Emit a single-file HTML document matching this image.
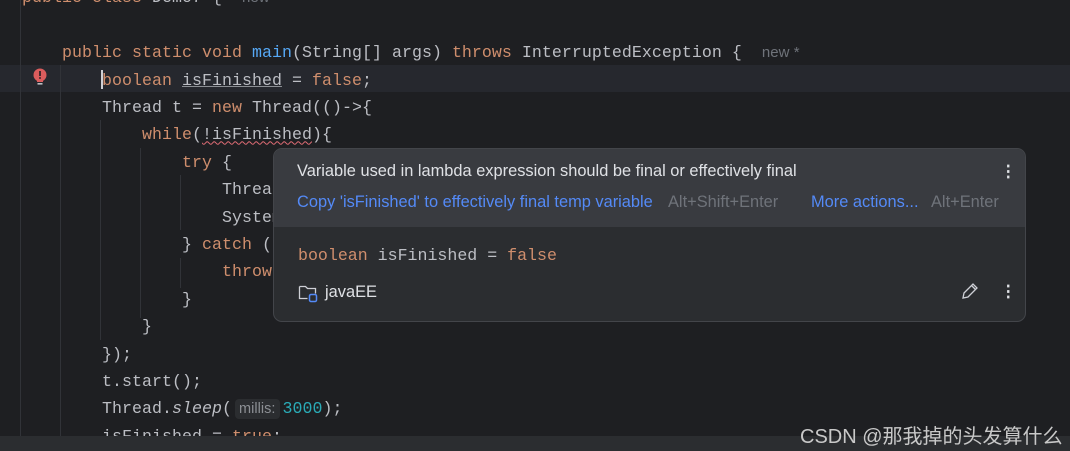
<!DOCTYPE html>
<html><head><meta charset="utf-8"><style>
body{margin:0;width:1070px;height:451px;overflow:hidden;background:#1e1f22;position:relative;font-family:"Liberation Mono",monospace;}
.ln{position:absolute;left:22px;height:27.4px;line-height:27.4px;font-size:16.6px;color:#bcbec4;white-space:pre;letter-spacing:0.04px}
.k{color:#cf8e6d}.m{color:#56a8f5}.n{color:#2aacb8}
.g{font-family:"Liberation Sans",sans-serif;color:#6f737a;font-size:15px}
.vl{position:absolute;width:1px;background:#313338}
.pop{position:absolute;left:273px;top:148px;width:751px;height:172px;border:1px solid #43454a;border-radius:9px;background:#2b2d30;overflow:hidden;font-family:"Liberation Sans",sans-serif;font-size:16.4px}
.pt{position:absolute;left:0;top:0;right:0;height:78px;background:#393b40}
.s{position:absolute;white-space:pre}
</style></head><body>
<div style="position:absolute;left:0;top:65px;width:1070px;height:27px;background:#26282e"></div>
<div class="vl" style="left:20px;top:0;height:436px"></div>
<div class="vl" style="left:60px;top:65px;height:371px"></div>
<div class="vl" style="left:100px;top:120px;height:220px"></div>
<div class="vl" style="left:140px;top:148px;height:170px"></div>
<div class="vl" style="left:180px;top:175px;height:55px"></div>
<div class="vl" style="left:180px;top:258px;height:30px"></div>
<svg style="position:absolute;left:32px;top:68px" width="16" height="20" viewBox="0 0 16 20"><circle cx="8" cy="7" r="6.5" fill="#db5c5c"/><path d="M5 12 h6 v2 h-6z" fill="#db5c5c"/><rect x="5.5" y="15" width="5" height="1.6" fill="#bcbec4"/><rect x="7.2" y="3" width="1.6" height="5" fill="#1e1f22"/><rect x="7.2" y="9.2" width="1.6" height="1.6" fill="#1e1f22"/></svg>
<div class="ln" style="top:-15.7px"><span class="k">public class</span> Demo7 {  <span class="g">new</span></div>
<div class="ln" style="top:39.1px">    <span class="k">public static void</span> <span class="m">main</span>(String[] args) <span class="k">throws</span> InterruptedException {  <span class="g">new *</span></div>
<div class="ln" style="top:66.5px">        <span class="k">boolean</span> <span style="text-decoration:underline;text-decoration-color:#8c8f94">isFinished</span> = <span class="k">false</span>;</div>
<div style="position:absolute;left:101px;top:70px;width:2px;height:19px;background:#ced0d6"></div>
<div class="ln" style="top:93.9px">        Thread t = <span class="k">new</span> Thread(()->{</div>
<div class="ln" style="top:121.3px">            <span class="k">while</span>(<span style="text-decoration:underline wavy #e06c75;text-decoration-thickness:1px">!isFinished</span>){</div>
<div class="ln" style="top:148.7px">                <span class="k">try</span> {</div>
<div class="ln" style="top:176.1px">                    Thread.sleep(</div>
<div class="ln" style="top:203.5px">                    System</div>
<div class="ln" style="top:230.9px">                } <span class="k">catch</span> (</div>
<div class="ln" style="top:258.3px">                    <span class="k">throw</span></div>
<div class="ln" style="top:285.7px">                }</div>
<div class="ln" style="top:313.1px">            }</div>
<div class="ln" style="top:340.5px">        });</div>
<div class="ln" style="top:367.9px">        t.start();</div>
<div class="ln" style="top:395.3px">        Thread.<i>sleep</i>(<span style="font-family:'Liberation Sans',sans-serif;font-size:14.5px;color:#8c8f94;background:#2b2d30;border-radius:4px;padding:2px 4px;margin:0 3px">millis:</span><span class="n">3000</span>);</div>
<div class="ln" style="top:422.7px">        isFinished = <span class="k">true</span>;</div>
<div style="position:absolute;left:0;top:436px;width:1070px;height:15px;background:#2b2d30"></div>
<div class="pop">
<div class="pt"></div>
<div class="s" style="left:23px;top:13px;color:#dfe1e5">Variable used in lambda expression should be final or effectively final</div>
<div class="s" style="left:23px;top:44px;color:#548af7">Copy 'isFinished' to effectively final temp variable</div>
<div class="s" style="left:394px;top:44px;color:#6f737a">Alt+Shift+Enter</div>
<div class="s" style="left:537px;top:44px;color:#548af7">More actions...</div>
<div class="s" style="left:657px;top:44px;color:#6f737a">Alt+Enter</div>
<div class="s" style="left:726px;top:13px;color:#dfe1e5;font-weight:bold">⋮</div>
<div class="s" style="left:24px;top:97px;font-family:'Liberation Mono',monospace;font-size:16.6px;color:#bcbec4"><span class="k">boolean</span> isFinished = <span class="k">false</span></div>
<svg style="position:absolute;left:24px;top:134px" width="22" height="20" viewBox="0 0 22 20"><path d="M1.5 3.5 h6 l2 2 h8 v5 M1.5 3.5 v12 h8" fill="none" stroke="#ced0d6" stroke-width="1.3"/><rect x="11.5" y="11.5" width="7" height="7" rx="1.5" fill="none" stroke="#548af7" stroke-width="1.5"/></svg>
<div class="s" style="left:51px;top:134px;color:#dfe1e5">javaEE</div>
<svg style="position:absolute;left:686px;top:132px" width="20" height="20" viewBox="0 0 20 20"><path d="M3 17 l1-5 l9-9 l4 4 l-9 9 z M11.5 4.5 l4 4" fill="none" stroke="#ced0d6" stroke-width="1.3"/></svg>
<div class="s" style="left:726px;top:133px;color:#dfe1e5;font-weight:bold">⋮</div>
</div>
<div class="s" style="left:800px;top:420px;font-family:'Liberation Sans','Noto Sans CJK SC',sans-serif;font-size:20px;color:#c8c8c8">CSDN @那我掉的头发算什么</div>
</body></html>
